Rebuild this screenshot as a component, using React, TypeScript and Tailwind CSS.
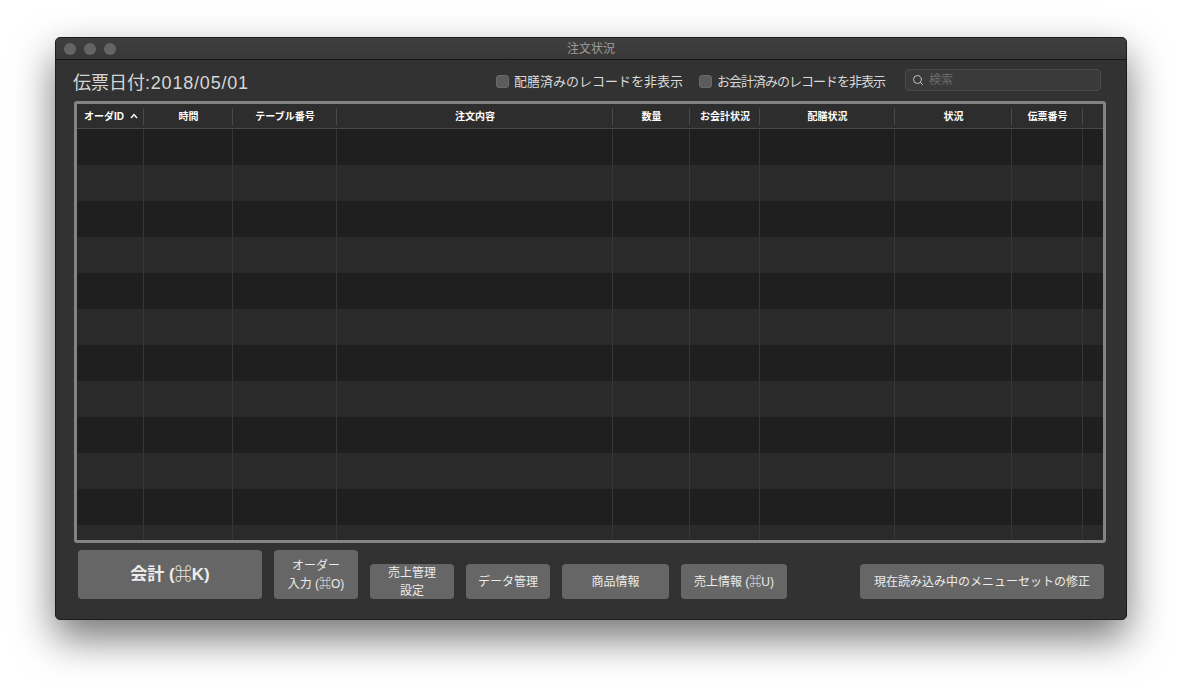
import { Search } from "lucide-react";

const columns = [
  { label: "オーダID", w: 67, align: "left" },
  { label: "時間", w: 89 },
  { label: "テーブル番号", w: 104 },
  { label: "注文内容", w: 276 },
  { label: "数量", w: 77 },
  { label: "お会計状況", w: 70 },
  { label: "配膳状況", w: 135 },
  { label: "状況", w: 117 },
  { label: "伝票番号", w: 71 },
  { label: "", w: 20 },
];

const rows = Array.from({ length: 12 });

const font = {
  fontFamily: '"Liberation Sans", "Noto Sans CJK JP", sans-serif',
};

const Checkbox = ({ label, className }: { label: string; className?: string }) => (
  <label className="flex items-center gap-[5px] text-[13px] text-[#d9d9d9]">
    <span className="w-[13px] h-[13px] rounded-[3px] bg-[#5c5c5c] border border-[#6a6a6a]" />
    <span className={className}>{label}</span>
  </label>
);

const Button = ({
  children,
  className,
}: {
  children: React.ReactNode;
  className: string;
}) => (
  <button
    className={`rounded-[4px] bg-[#666666] text-[#ececec] leading-[18px] flex items-center justify-center text-center ${className}`}
  >
    {children}
  </button>
);

const App = () => {
  return (
    <div className="w-[1182px] h-[694px] bg-white overflow-hidden pt-[37px] pl-[55px]" style={font}>
      <div className="w-[1072px] h-[583px] rounded-[5px] bg-[#323232] border border-[#1c1c1c] shadow-[0_18px_40px_rgba(0,0,0,0.55)] flex flex-col overflow-hidden">
        {/* title bar */}
        <div className="relative h-[22px] shrink-0 bg-gradient-to-b from-[#3f3f3f] to-[#383838] border-b border-[#151515] flex items-center justify-center">
          <div className="absolute left-[8px] top-[5px] flex gap-[8px]">
            <span className="w-[12px] h-[12px] rounded-full bg-[#646464]" />
            <span className="w-[12px] h-[12px] rounded-full bg-[#646464]" />
            <span className="w-[12px] h-[12px] rounded-full bg-[#646464]" />
          </div>
          <span className="text-[12px] text-[#9d9d9d]">注文状況</span>
        </div>

        {/* toolbar */}
        <div className="h-[41px] shrink-0 flex items-center pl-[17px] pr-[25px]">
          <div className="text-[18px] text-[#d6d6d6] pt-[6px]">
            伝票日付<span className="tracking-[0.8px]">:2018/05/01</span>
          </div>
          <div className="ml-auto flex items-center pt-[2px]">
            <Checkbox label="配膳済みのレコードを非表示" />
            <div className="w-[16px]" />
            <Checkbox label="お会計済みのレコードを非表示" className="tracking-[-1px]" />
            <div className="ml-[20px] w-[196px] h-[22px] rounded-[4px] bg-[#3a3a3a] border border-[#4a4a4a] flex items-center gap-[5px] px-[6px] -mt-[4px]">
              <Search size={12} strokeWidth={2} className="text-[#c4c4c4]" />
              <span className="text-[12px] text-[#6a6a6a]">検索</span>
            </div>
          </div>
        </div>

        {/* table */}
        <div className="ml-[18px] w-[1032px] h-[442px] shrink-0 border-[3px] border-[#838383] rounded-[3px] overflow-hidden flex flex-col">
          <div className="h-[25px] shrink-0 bg-[#2d2d2d] border-b border-[#484848] flex">
            {columns.map((c, i) => (
              <div
                key={i}
                className="h-full flex items-center relative"
                style={{ width: c.w }}
              >
                <span
                  className={`w-full text-[10px] font-bold text-white flex items-center ${
                    c.align === "left" ? "pl-[7px] justify-start" : "justify-center"
                  }`}
                >
                  {c.label}
                  {i === 0 && (
                    <svg width="8" height="6" viewBox="0 0 8 6" className="ml-[6px]">
                      <path d="M1 5 L4 1.5 L7 5" stroke="white" strokeWidth="1.4" fill="none" />
                    </svg>
                  )}
                </span>
                {i < columns.length - 1 && (
                  <span className="absolute right-0 top-[4px] bottom-[3px] w-px bg-[#4a4a4a]" />
                )}
              </div>
            ))}
          </div>
          <div className="flex-1 overflow-hidden">
            {rows.map((_, r) => (
              <div
                key={r}
                className={`h-[36px] flex ${r % 2 === 0 ? "bg-[#1f1f1f]" : "bg-[#2a2a2a]"}`}
              >
                {columns.map((c, i) => (
                  <div
                    key={i}
                    className={`h-full ${i < columns.length - 1 ? "border-r border-[#363636]" : ""}`}
                    style={{ width: c.w }}
                  />
                ))}
              </div>
            ))}
          </div>
        </div>

        {/* buttons */}
        <div className="flex items-end pl-[22px] pr-[22px] pt-[7px]">
          <Button className="w-[184px] h-[49px] text-[17px] font-semibold">会計 (⌘K)</Button>
          <Button className="ml-[12px] w-[84px] h-[49px] text-[12px] flex-col leading-[17px]">
            <span>オーダー</span>
            <span>入力 (⌘O)</span>
          </Button>
          <Button className="ml-[12px] w-[84px] h-[35px] text-[12px] flex-col leading-[17px]">
            <span>売上管理</span>
            <span>設定</span>
          </Button>
          <Button className="ml-[12px] w-[84px] h-[35px] text-[12px]">データ管理</Button>
          <Button className="ml-[12px] w-[107px] h-[35px] text-[12px]">商品情報</Button>
          <Button className="ml-[12px] w-[106px] h-[35px] text-[12px]">売上情報 (⌘U)</Button>
          <Button className="ml-auto w-[244px] h-[35px] text-[12px]">現在読み込み中のメニューセットの修正</Button>
        </div>
      </div>
    </div>
  );
};

export default App;
